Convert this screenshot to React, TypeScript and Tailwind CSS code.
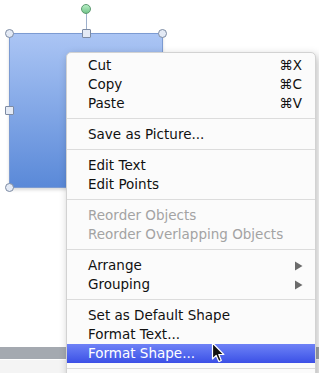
import React from "react";

type Item = { label: string; shortcut?: string; disabled?: boolean; submenu?: boolean; active?: boolean };

const groups: Item[][] = [
  [
    { label: "Cut", shortcut: "⌘X" },
    { label: "Copy", shortcut: "⌘C" },
    { label: "Paste", shortcut: "⌘V" },
  ],
  [{ label: "Save as Picture..." }],
  [{ label: "Edit Text" }, { label: "Edit Points" }],
  [
    { label: "Reorder Objects", disabled: true },
    { label: "Reorder Overlapping Objects", disabled: true },
  ],
  [
    { label: "Arrange", submenu: true },
    { label: "Grouping", submenu: true },
  ],
  [
    { label: "Set as Default Shape" },
    { label: "Format Text..." },
    { label: "Format Shape...", active: true },
  ],
];

const handleBase = "absolute w-[9px] h-[9px] border border-[#7d8ba3] bg-[#e4eaf5]";

function MenuRow({ item }: { item: Item }) {
  const color = item.active ? "text-white" : item.disabled ? "text-[#a3a3a3]" : "text-[#111]";
  return (
    <div
      className={`flex items-center justify-between h-[19px] leading-[19px] pl-[21px] pr-[13px] ${color} ${
        item.active ? "bg-gradient-to-b from-[#6f82f6] to-[#3c4fe6]" : ""
      }`}
    >
      <span>{item.label}</span>
      {item.shortcut && <span>{item.shortcut}</span>}
      {item.submenu && (
        <svg width="9" height="10" viewBox="0 0 9 10" className="mr-[-1px]">
          <path d="M1 0.5 L8.5 5 L1 9.5 Z" fill="#6b6b6b" />
        </svg>
      )}
    </div>
  );
}

export default function App() {
  return (
    <div
      className="relative flex flex-col w-[319px] h-[373px] bg-white overflow-hidden"
      style={{ fontFamily: '"DejaVu Sans", sans-serif' }}
    >
      {/* slide canvas */}
      <div className="h-[347px] pl-[9px] pt-[33px]">
        <div className="relative w-[154px] h-[155px] border border-[#7c9bd2] bg-gradient-to-b from-[#abc5f4] to-[#5a89d8] shadow-[0_2px_3px_rgba(0,0,0,0.15)]">
          {/* rotation handle */}
          <div className="absolute left-[76px] -top-[21px] w-px h-[16px] bg-[#9db0cc]" />
          <div className="absolute left-[71px] -top-[30px] w-[10px] h-[10px] rounded-full border border-[#5c9a70] bg-gradient-to-b from-[#b6eec4] to-[#73c58c]" />
          {/* selection handles */}
          <div className={`${handleBase} rounded-full -left-[5px] -top-[5px]`} />
          <div className={`${handleBase} rounded-full -right-[5px] -top-[5px]`} />
          <div className={`${handleBase} rounded-full -left-[5px] -bottom-[5px]`} />
          <div className={`${handleBase} rounded-[1px] left-[72px] -top-[5px]`} />
          <div className={`${handleBase} rounded-[1px] -left-[5px] top-[72px]`} />
        </div>
      </div>

      {/* window bottom bar */}
      <div className="h-[12px] bg-[#a4a9b0]" />
      <div className="flex-1 bg-[#f4f4f4] border-t border-white" />

      {/* context menu */}
      <div className="absolute left-[66px] top-[52px] w-[250px] h-[340px] pt-[3px] bg-[#fbfbfb] rounded-[5px] border border-[#d2d2d2] shadow-[2px_3px_8px_rgba(0,0,0,0.25)] text-[13.5px]">
        {groups.map((g, i) => (
          <div key={i}>
            {g.map((item) => (
              <MenuRow key={item.label} item={item} />
            ))}
            <div className="pt-[5px] pb-[6px]">
              <div className="h-px bg-[#dcdcdc]" />
            </div>
          </div>
        ))}
      </div>

      {/* mouse pointer */}
      <svg className="absolute left-[211px] top-[342px]" width="14" height="22" viewBox="0 0 14 22">
        <path
          d="M1.5 1 L1.5 17 L5.2 13.4 L7.8 19.6 L10.3 18.5 L7.8 12.5 L12.8 12.5 Z"
          fill="#111"
          stroke="#fff"
          strokeWidth="1.2"
          strokeLinejoin="round"
        />
      </svg>
    </div>
  );
}
